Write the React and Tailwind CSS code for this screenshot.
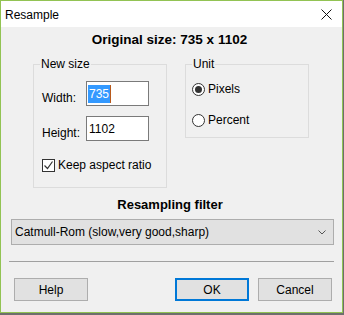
export default function App() {
  const font = { fontFamily: '"Liberation Sans", Arial, sans-serif' }

  return (
    <div className="w-[344px] h-[315px] bg-[#6e6e6e] overflow-hidden" style={font}>
      <div className="w-[343px] h-[313px] border border-[#92c353] bg-[#f0f0f0] flex flex-col text-[12px] text-black">
        {/* Title bar */}
        <div className="h-[26px] bg-white flex items-center justify-between pl-[4px] pr-[10px]">
          <span className="text-[12px] leading-[16px] mt-[1px]">Resample</span>
          <svg width="11" height="11" viewBox="0 0 11 11" className="mt-[1px]">
            <path d="M0.5 0.5 L10.5 10.5 M10.5 0.5 L0.5 10.5" stroke="#111" strokeWidth="1" />
          </svg>
        </div>

        {/* Body */}
        <div className="flex-1 flex flex-col">
          <div className="mt-[5px] h-[16px] leading-[16px] text-center font-bold text-[13.5px] pr-[4px]">
            Original size: 735 x 1102
          </div>

          <div className="flex mt-[8px]">
            {/* New size */}
            <fieldset className="ml-[32px] w-[134px] h-[132px] border border-[#dcdcdc]">
              <legend className="ml-[6px] px-[1px] leading-[16px]">New size</legend>
              <div className="pl-[8px] pt-[9px]">
                <div className="flex items-end h-[25px]">
                  <span className="w-[44px] leading-[16px]">Width:</span>
                  <div className="w-[63px] h-[25px] bg-white border border-[#7a7a7a] flex items-center pl-[1px]">
                    <span className="bg-[#3399ff] text-white leading-[18px] px-[1px]">735</span>
                    <span className="w-[1px] h-[18px] bg-[#b85a1c]" />
                  </div>
                </div>
                <div className="flex items-end h-[25px] mt-[10px]">
                  <span className="w-[44px] leading-[16px]">Height:</span>
                  <div className="w-[63px] h-[25px] bg-white border border-[#7a7a7a] flex items-center pl-[2px]">
                    <span className="leading-[18px]">1102</span>
                  </div>
                </div>
                <div className="flex items-center mt-[16px]">
                  <div className="w-[13px] h-[13px] border border-[#333] bg-white flex items-center justify-center">
                    <svg width="11" height="11" viewBox="0 0 11 11">
                      <path d="M1.5 5.5 L4.5 8.5 L9.5 1.5" fill="none" stroke="#333" strokeWidth="1.2" />
                    </svg>
                  </div>
                  <span className="ml-[3px] leading-[16px]">Keep aspect ratio</span>
                </div>
              </div>
            </fieldset>

            {/* Unit */}
            <fieldset className="ml-[18px] w-[124px] h-[82px] border border-[#dcdcdc]">
              <legend className="ml-[6px] px-[1px] leading-[16px]">Unit</legend>
              <div className="pl-[6px] pt-[9px]">
                <div className="flex items-center h-[16px]">
                  <div className="w-[13px] h-[13px] rounded-full border border-[#333] bg-white flex items-center justify-center">
                    <div className="w-[7px] h-[7px] rounded-full bg-[#333]" />
                  </div>
                  <span className="ml-[3px] leading-[16px]">Pixels</span>
                </div>
                <div className="flex items-center h-[16px] mt-[15px]">
                  <div className="w-[13px] h-[13px] rounded-full border border-[#333] bg-white" />
                  <span className="ml-[3px] leading-[16px]">Percent</span>
                </div>
              </div>
            </fieldset>
          </div>

          <div className="mt-[9px] h-[16px] leading-[16px] text-center font-bold text-[13px] pr-[3px]">
            Resampling filter
          </div>

          <div className="ml-[10px] mt-[6px] w-[323px] h-[26px] bg-[#e1e1e1] border border-[#adadad] flex items-center justify-between pl-[3px] pr-[7px]">
            <span className="leading-[16px]">Catmull-Rom (slow,very good,sharp)</span>
            <svg width="8" height="5" viewBox="0 0 8 5">
              <path d="M0.5 0.5 L4 4 L7.5 0.5" fill="none" stroke="#555" strokeWidth="1" />
            </svg>
          </div>

          <div className="ml-[8px] mt-[16px] w-[325px] h-[1px] bg-[#a0a0a0]" />

          <div className="flex mt-[16px] pl-[13px]">
            <button className="w-[74px] h-[23px] bg-[#e1e1e1] border border-[#adadad] leading-[16px]">Help</button>
            <button className="ml-[87px] w-[74px] h-[23px] bg-[#e1e1e1] border-2 border-[#0078d7] leading-[16px]">OK</button>
            <button className="ml-[9px] w-[74px] h-[23px] bg-[#e1e1e1] border border-[#adadad] leading-[16px]">Cancel</button>
          </div>
        </div>
      </div>
    </div>
  )
}
